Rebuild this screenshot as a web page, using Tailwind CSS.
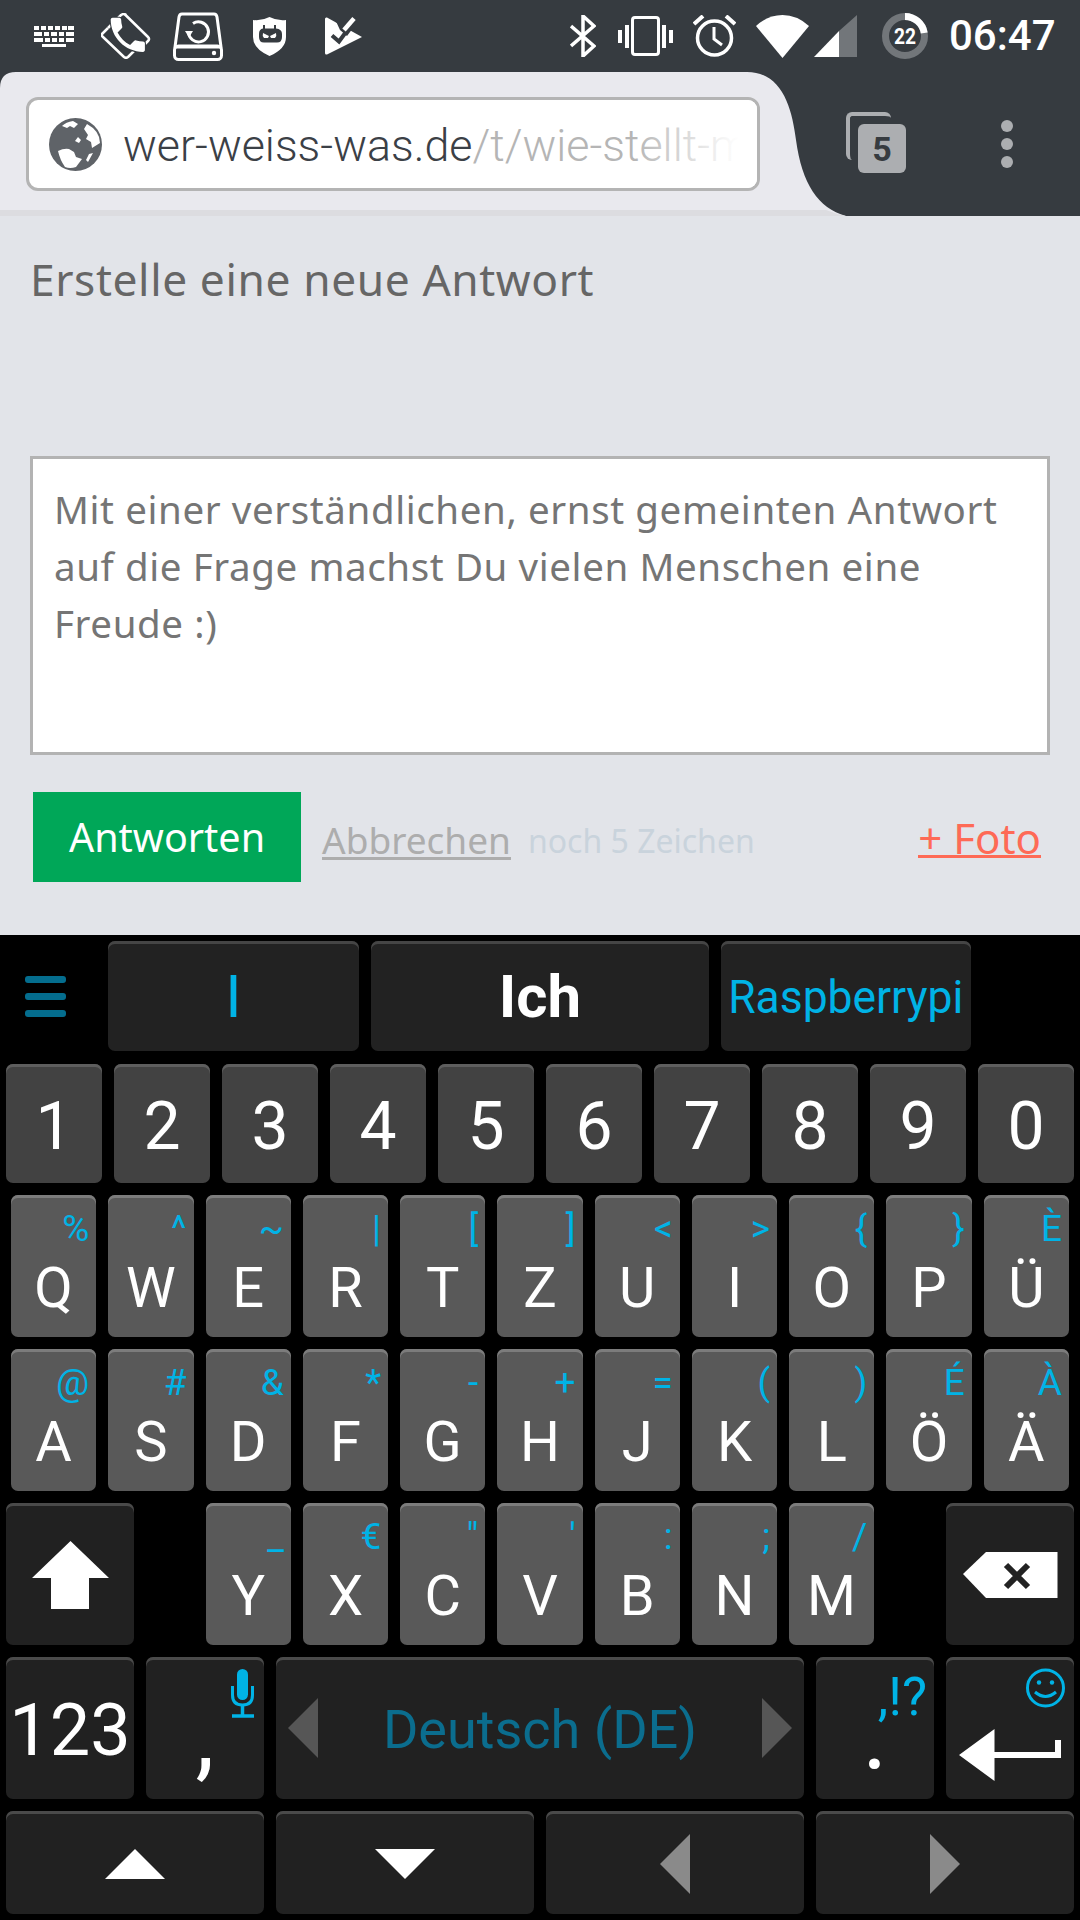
<!DOCTYPE html>
<html lang="de">
<head>
    <meta charset="UTF-8">
    <meta name="viewport" content="width=device-width, initial-scale=1.0">
    <title>Erstelle eine neue Antwort</title>
    <script src="https://cdn.jsdelivr.net/npm/@tailwindcss/browser@4"></script>
</head>
<body class="w-[1080px] h-[1920px] overflow-hidden bg-black font-['Roboto',sans-serif]">

    <!-- status bar -->
    <div class="h-[72px] bg-[#363b40] flex items-center text-white">
        <svg class="ml-[34px] w-[40px] h-[21px]" viewBox="0 0 40 21" fill="#fff">
            <path d="M0 0h5v4H0zM7 0h5v4H7zM14 0h5v4h-5zM21 0h5v4h-5zM28 0h5v4h-5zM34 0h6v4h-6z"/>
            <path d="M0 6h8v4H0zM10 6h5v4h-5zM17 6h6v4h-6zM25 6h5v4h-5zM32 6h8v4h-8z"/>
            <path d="M0 12h9v4H0zM11 12h5v4h-5zM18 12h5v4h-5zM25 12h5v4h-5zM32 12h8v4h-8z"/>
            <path d="M8 18h24v3H8z"/>
        </svg>
        <svg class="ml-[27px] w-[50px] h-[46px]" viewBox="0 0 50 46" fill="none">
            <path d="M24 1.500 47 24q2 2 0 4l-3 3M7 15 1.500 20.500q-1.500 1.500 0 3L23 44q2 1.500 4 0l6-6" stroke="#fff" stroke-width="2.500" stroke-linejoin="round"/>
            <path d="M7 15 20 2q3-2 5 0" stroke="#fff" stroke-width="2.500"/>
            <g transform="translate(4 -1) scale(1.900)">
                <path d="M6.620 10.790c1.440 2.830 3.760 5.140 6.590 6.590l2.200-2.200c.27-.27.67-.36 1.020-.24 1.120.37 2.330.57 3.570.57.55 0 1 .45 1 1V20c0 .55-.45 1-1 1-9.390 0-17-7.610-17-17 0-.55.45-1 1-1h3.500c.55 0 1 .45 1 1 0 1.250.2 2.450.57 3.570.11.35.03.74-.25 1.020l-2.200 2.200z" fill="#fff" stroke="#363b40" stroke-width="1.100" paint-order="stroke"/>
            </g>
        </svg>
        <svg class="ml-[22px] w-[50px] h-[49px]" viewBox="0 0 50 49" fill="none" stroke="#fff" stroke-width="3">
            <path d="M9 2h32q2.500 0 3 3l4 30H2L6 5q.5-3 3-3z" stroke-linejoin="round"/>
            <rect x="1.500" y="34" width="47" height="13.500" rx="4"/>
            <circle cx="41" cy="41" r="2.200" fill="#fff" stroke="none"/>
            <path d="M15.500 20.500a10 10 0 1 0 4.500-9" stroke-width="3"/>
            <path d="M12 19h8l-4 6.500z" fill="#fff" stroke="none"/>
        </svg>
        <svg class="ml-[30px] w-[33px] h-[39px]" viewBox="0 0 33 39">
            <path d="M16.500 0Q24 4 33 3v17q0 12-16.500 19Q0 32 0 20V3q9 1 16.500-3z" fill="#fff"/>
            <path d="M10 8h2v3.500h9V8h2v3.500q6 .5 6 5.500v3q0 5.500-5 5.500H11q-5 0-5-5.500v-3q0-5 4-5.500z" fill="#363b40"/>
            <path d="M10 16l6 3-1 2h-4q-2-2-1-5zM23 16l-6 3 1 2h4q2-2 1-5z" fill="#fff"/>
        </svg>
        <svg class="ml-[39px] w-[37px] h-[38px]" viewBox="0 0 37 38">
            <path d="M0 2Q0 0 2 .5L37 20 2 37.500Q0 38 0 36z" fill="#fff"/>
            <path d="M9 0H37V16L28 11 22 19 15 13z" fill="#363b40"/>
            <path d="M7 18.500l7 6 11-15" fill="none" stroke="#363b40" stroke-width="4"/>
            <path d="M19 13 29 1.500" fill="none" stroke="#fff" stroke-width="4.500"/>
        </svg>
        <svg class="ml-[208px] w-[26px] h-[42px]" viewBox="0 0 26 42" fill="none" stroke="#fff" stroke-width="3.500">
            <path d="M1 11l23 20-11 10V1l11 10L1 31"/>
        </svg>
        <svg class="ml-[22px] w-[55px] h-[40px]" viewBox="0 0 55 40" fill="none">
            <rect x="14.500" y="1.500" width="26" height="37" rx="2.500" stroke="#fff" stroke-width="3"/>
            <path d="M0 14h4v13H0zM7 9h4v23H7zM44 9h4v23h-4zM51 14h4v13h-4z" fill="#fff"/>
        </svg>
        <svg class="ml-[20px] w-[43px] h-[42px]" viewBox="0 0 43 42" fill="none" stroke="#fff">
            <circle cx="21.500" cy="23" r="17" stroke-width="3.500"/>
            <path d="M21 12v12l8 6" stroke-width="3"/>
            <path d="M1 9l9-8M42 9l-9-8" stroke-width="4"/>
        </svg>
        <svg class="ml-[20px] w-[53px] h-[43px]" viewBox="0 0 53 43">
            <path d="M26.500 43 0 11Q12 0 26.500 0T53 11z" fill="#fff"/>
        </svg>
        <svg class="ml-[5px] w-[43px] h-[42px]" viewBox="0 0 43 42">
            <path d="M43 0v42H25V16z" fill="#72767a"/>
            <path d="M25 16v26H0z" fill="#fff"/>
        </svg>
        <svg class="ml-[25px] w-[46px] h-[46px]" viewBox="0 0 46 46" fill="none">
            <circle cx="23" cy="23" r="19.500" stroke="#72767a" stroke-width="7"/>
            <path d="M23 3.500A19.500 19.500 0 0 1 42.200 20" stroke="#fff" stroke-width="7"/>
            <text x="23" y="31" text-anchor="middle" fill="#fff" font-size="22" font-weight="700" font-family="Roboto" textLength="22" lengthAdjust="spacingAndGlyphs">22</text>
        </svg>
        <span class="ml-[21px] text-[42px] font-medium leading-none">06:47</span>
    </div>

    <!-- browser toolbar -->
    <div class="relative h-[144px] bg-[#363b40] flex items-start">
        <svg class="absolute inset-0 w-[1080px] h-[144px]" viewBox="0 0 1080 144">
            <path d="M0 144V16Q0 0 16 0H747C782 0 792 36 796 68 802 112 818 136 846 144Z" fill="#e9e9ee"/>
            <path d="M0 138H826Q836 142 846 144H0Z" fill="#dcdce0"/>
        </svg>
        <div class="relative ml-[26px] mt-[25px] w-[734px] h-[94px] rounded-[12px] border-[3px] border-[#b4b4b4] bg-white flex items-center overflow-hidden">
            <svg class="ml-[20px] w-[53px] h-[53px] shrink-0" viewBox="0 0 53 53">
                <circle cx="26.500" cy="26.500" r="26.500" fill="#5f6368"/>
                <path d="M24 3q-7 1-11 5l5 2 3-2 4 2 4-4zM38 6l-3 5 4 6-2 4 5 3 1 6 8-5q0-12-13-19zM9 33q6-3 11-2l5 3 2 5 6 2-6 8q-6 2-11 0-5-7-7-16zM29 19l3 3-2 3-4-2zM40 36l4-1-5 9-2-2z" fill="#fff"/>
            </svg>
            <span class="ml-[21px] pt-[3px] text-[44.800px] font-light text-[#3b4046] whitespace-nowrap">wer-weiss-was.de<span class="text-[#b5b5b5]">/t/wie-stellt-m</span></span>
            <div class="absolute right-0 top-0 bottom-0 w-[125px] bg-gradient-to-r from-white/0 to-white to-85%"></div>
        </div>
        <div class="relative ml-[86px] mt-[40px] w-[60px] h-[61px]">
            <div class="absolute left-0 top-0 w-[45px] h-[48px] rounded-[6px] border-l-[4px] border-t-[4px] border-[#acaeb1]"></div>
            <div class="absolute left-[12px] top-[12px] w-[48px] h-[49px] rounded-[6px] bg-[#acaeb1] flex items-center justify-center text-[#363b40] text-[34px] font-bold leading-none">5</div>
        </div>
        <div class="ml-[95px] mt-[48px] flex flex-col gap-[6px]">
            <div class="relative w-[12px] h-[12px] rounded-full bg-[#acaeb1]"></div>
            <div class="relative w-[12px] h-[12px] rounded-full bg-[#acaeb1]"></div>
            <div class="relative w-[12px] h-[12px] rounded-full bg-[#acaeb1]"></div>
        </div>
    </div>

    <!-- page -->
    <main class="h-[719px] bg-[#e2e4e9] px-[30px] pt-[34px] font-['Noto_Sans',sans-serif]">
        <h1 class="text-[44.300px] leading-[58px] font-normal text-[#666] tracking-[0.6px]">Erstelle eine neue Antwort</h1>
        <div class="mt-[148px] h-[299px] border-[3px] border-[#b3b3b3] bg-white pl-[21px] pt-[22px] text-[38.500px] leading-[57px] text-[#757575] tracking-[0.6px] whitespace-nowrap">
            Mit einer verständlichen, ernst gemeinten Antwort<br>auf die Frage machst Du vielen Menschen eine<br>Freude :)
        </div>
        <div class="mt-[37px] flex items-center">
            <div class="ml-[3px] w-[268px] h-[90px] bg-[#00a758] text-white text-[39.500px] flex items-center justify-center pt-[2px]">Antworten</div>
            <span class="ml-[21px] mt-[7px] text-[37px] leading-[35px] text-[#adadad] border-b-[3px] border-[#adadad]">Abbrechen</span>
            <span class="ml-[17px] mt-[8px] text-[32px] text-[#c9d3dc]">noch 5 Zeichen</span>
            <span class="ml-auto mr-[9px] mt-[3px] text-[42px] leading-[35px] text-[#fe6a56] border-b-[3px] border-[#fe6a56]">+ Foto</span>
        </div>
    </main>

    <!-- keyboard -->
    <section id="keyboard" class="h-[985px] bg-black pt-[6px] flex flex-col text-white">
        <div class="h-[110px] flex items-stretch">
            <div class="w-[108px] pl-[25px] pt-[35px] flex flex-col gap-[10px]">
                <div class="w-[41px] h-[7px] rounded-[3px] bg-[#046d8e]"></div>
                <div class="w-[41px] h-[7px] rounded-[3px] bg-[#046d8e]"></div>
                <div class="w-[41px] h-[7px] rounded-[3px] bg-[#046d8e]"></div>
            </div>
            <div class="w-[251px] rounded-[7px] bg-[#222] shadow-[inset_0_3px_0_#454545] flex items-center justify-center text-[#00b3e6] text-[60px] leading-none pt-[2px]">I</div>
            <div class="ml-[12px] w-[338px] rounded-[7px] bg-[#222] shadow-[inset_0_3px_0_#454545] flex items-center justify-center text-[60px] font-bold leading-none pt-[2px]">Ich</div>
            <div class="ml-[12px] w-[250px] rounded-[7px] bg-[#222] shadow-[inset_0_3px_0_#454545] flex items-center justify-center text-[#00b3e6] leading-none pt-[2px]"><span class="text-[46px] scale-x-[0.965]">Raspberrypi</span></div>
        </div>
        <div id="row-numbers" class="mt-[13px] h-[119px] px-[6px] flex gap-[12px]"></div>
        <div id="row-top" class="mt-[12px] h-[142px] px-[11px] flex gap-[12px]"></div>
        <div id="row-middle" class="mt-[12px] h-[142px] px-[11px] flex gap-[12px]"></div>
        <div class="mt-[12px] h-[142px] px-[6px] flex justify-between">
            <div class="w-[128px] rounded-[7px] bg-[#212121] shadow-[inset_0_3px_0_#4a4a4a]">
                <svg class="w-[128px] h-[142px]" viewBox="0 0 128 142"><path d="M64.500 38 103 75H83v31H45V75H26z" fill="#fff"/></svg>
            </div>
            <div id="row-bottom" class="flex gap-[12px]"></div>
            <div class="w-[128px] rounded-[7px] bg-[#212121] shadow-[inset_0_3px_0_#4a4a4a]">
                <svg class="w-[128px] h-[142px]" viewBox="0 0 128 142">
                    <path d="M17 71 40 49h71.500v46H40z" fill="#fff"/>
                    <path d="M60 62 82 84M82 62 60 84" stroke="#222" stroke-width="6"/>
                </svg>
            </div>
        </div>
        <div class="mt-[12px] h-[142px] px-[6px] flex">
            <div class="w-[128px] rounded-[7px] bg-[#212121] shadow-[inset_0_3px_0_#4a4a4a] flex justify-center pt-[38px] text-[72px] leading-none">123</div>
            <div class="relative ml-[12px] w-[118px] rounded-[7px] bg-[#212121] shadow-[inset_0_3px_0_#4a4a4a] flex justify-center pt-[63px] text-[96px] leading-[30px]">,
                <svg class="absolute left-[85px] top-[12px] w-[24px] h-[49px]" viewBox="0 0 24 49" fill="none">
                    <rect x="6" y="0" width="11" height="31" rx="5.500" fill="#00b3e6"/>
                    <path d="M1.500 17v9q0 10 10 10t10-10v-9" stroke="#00b3e6" stroke-width="3"/>
                    <path d="M11.500 36v10M1 47h22" stroke="#00b3e6" stroke-width="3.500"/>
                </svg>
            </div>
            <div class="ml-[12px] w-[528px] rounded-[7px] bg-[#212121] shadow-[inset_0_3px_0_#4a4a4a] flex items-center justify-between px-[12px] text-[#0b6d8e] text-[54px] leading-none">
                <svg class="w-[30px] h-[60px]" viewBox="0 0 30 60"><path d="M30 0v60L0 30z" fill="#565656"/></svg>
                <span class="pt-[4px]">Deutsch (DE)</span>
                <svg class="w-[30px] h-[60px]" viewBox="0 0 30 60"><path d="M0 0v60l30-30z" fill="#565656"/></svg>
            </div>
            <div class="relative ml-[12px] w-[118px] rounded-[7px] bg-[#212121] shadow-[inset_0_3px_0_#4a4a4a] flex justify-center pt-[63px] text-[96px] leading-[30px]">.
                <span class="absolute right-[7px] top-[18px] text-[53px] leading-[44px] text-[#00b3e6]">,!?</span>
            </div>
            <div class="ml-[12px] w-[128px] rounded-[7px] bg-[#212121] shadow-[inset_0_3px_0_#4a4a4a]">
                <svg class="w-[128px] h-[142px]" viewBox="0 0 128 142" fill="none">
                    <circle cx="99.500" cy="31" r="18" stroke="#00b3e6" stroke-width="3"/>
                    <circle cx="93" cy="25.500" r="2.200" fill="#00b3e6"/>
                    <circle cx="106" cy="25.500" r="2.200" fill="#00b3e6"/>
                    <path d="M89 35q10.500 9 21 0" stroke="#00b3e6" stroke-width="3"/>
                    <path d="M13 98 48.500 72v23H109V83h6v18H48.500v23z" fill="#fff"/>
                </svg>
            </div>
        </div>
        <div class="mt-[12px] h-[103px] px-[6px] flex gap-[12px]">
            <div class="flex-1 rounded-[7px] bg-[#212121] shadow-[inset_0_3px_0_#4a4a4a] flex items-center justify-center pt-[3px]">
                <svg class="w-[60px] h-[30px]" viewBox="0 0 60 30"><path d="M30 0l30 30H0z" fill="#fff"/></svg>
            </div>
            <div class="flex-1 rounded-[7px] bg-[#212121] shadow-[inset_0_3px_0_#4a4a4a] flex items-center justify-center pt-[3px]">
                <svg class="w-[60px] h-[30px]" viewBox="0 0 60 30"><path d="M0 0h60L30 30z" fill="#fff"/></svg>
            </div>
            <div class="flex-1 rounded-[7px] bg-[#212121] shadow-[inset_0_3px_0_#4a4a4a] flex items-center justify-center pt-[3px]">
                <svg class="w-[30px] h-[60px]" viewBox="0 0 30 60"><path d="M30 0v60L0 30z" fill="#8a8a8a"/></svg>
            </div>
            <div class="flex-1 rounded-[7px] bg-[#212121] shadow-[inset_0_3px_0_#4a4a4a] flex items-center justify-center pt-[3px]">
                <svg class="w-[30px] h-[60px]" viewBox="0 0 30 60"><path d="M0 0v60l30-30z" fill="#8a8a8a"/></svg>
            </div>
        </div>
    </section>

    <script>
        const numberKeys = ['1', '2', '3', '4', '5', '6', '7', '8', '9', '0'];
        const topKeys = [['Q', '%'], ['W', '^'], ['E', '~'], ['R', '|'], ['T', '['], ['Z', ']'], ['U', '<'], ['I', '>'], ['O', '{'], ['P', '}'], ['Ü', 'È']];
        const middleKeys = [['A', '@'], ['S', '#'], ['D', '&'], ['F', '*'], ['G', '-'], ['H', '+'], ['J', '='], ['K', '('], ['L', ')'], ['Ö', 'É'], ['Ä', 'À']];
        const bottomKeys = [['Y', '_'], ['X', '€'], ['C', '"'], ['V', "'"], ['B', ':'], ['N', ';'], ['M', '/']];

        const escapeHtml = (text) => text.replace(/&/g, '&amp;').replace(/</g, '&lt;');

        const renderLetter = ([letter, hint], widthClass) => `
            <div class="relative ${widthClass} rounded-[7px] bg-[#595959] shadow-[inset_0_3px_0_#7c7c7c] flex justify-center pt-[65px] text-[56px] leading-none">
                ${letter}
                <span class="absolute right-[7px] top-[15px] text-[37px] leading-none text-[#00b3e6]">${escapeHtml(hint)}</span>
            </div>
        `;

        document.getElementById('row-numbers').innerHTML = numberKeys.map(digit => `
            <div class="flex-1 rounded-[7px] bg-[#424242] shadow-[inset_0_3px_0_#5e5e5e] flex justify-center pt-[30px] text-[66px] leading-none">${digit}</div>
        `).join('');
        document.getElementById('row-top').innerHTML = topKeys.map(key => renderLetter(key, 'flex-1')).join('');
        document.getElementById('row-middle').innerHTML = middleKeys.map(key => renderLetter(key, 'flex-1')).join('');
        document.getElementById('row-bottom').innerHTML = bottomKeys.map(key => renderLetter(key, 'w-[85.200px]')).join('');
    </script>
</body>
</html>
